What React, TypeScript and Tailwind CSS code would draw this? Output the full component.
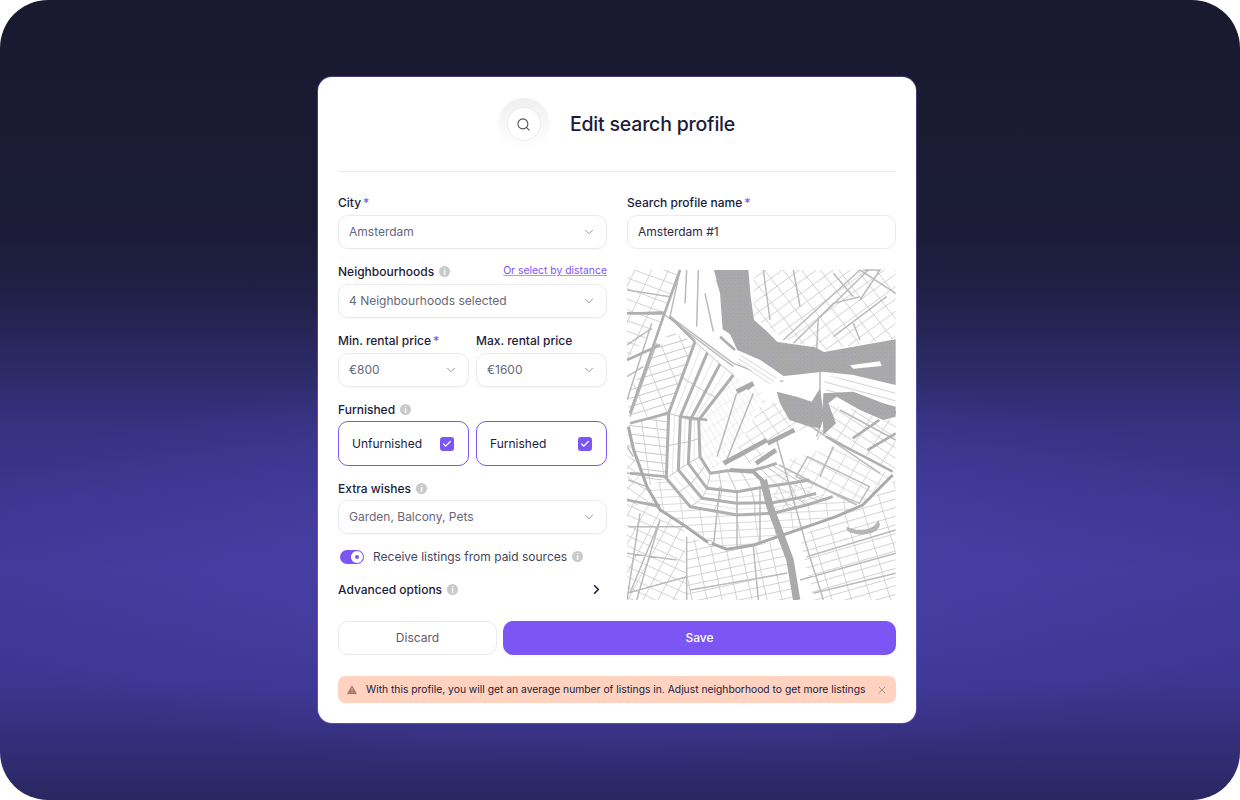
import { ChevronDown, ChevronRight, Check, Search, TriangleAlert, X } from "lucide-react";
import type { ReactNode } from "react";

const INK = "text-[#1c1b3a]";

function InfoDot() {
    return (
        <span className="inline-flex w-[11px] h-[11px] rounded-full bg-[#c9c9cd] items-center justify-center text-white text-[8px] font-bold leading-none">
            i
        </span>
    );
}

function Label({ children, required, info }: { children: ReactNode; required?: boolean; info?: boolean }) {
    return (
        <div className={`flex items-center h-4 pt-px text-[12px] font-medium ${INK}`}>
            <span>{children}</span>
            {required && <span className="ml-[2px] text-[#7c56f5]">*</span>}
            {info && (
                <span className="ml-[5px] flex">
                    <InfoDot />
                </span>
            )}
        </div>
    );
}

function SelectBox({ value }: { value: string }) {
    return (
        <div className="flex items-center justify-between h-[34px] px-[10px] rounded-[10px] border border-[#ebebef] bg-white text-[12px] text-[#67677a] shadow-[0_1px_1px_rgba(20,20,50,0.03)]">
            <span>{value}</span>
            <ChevronDown className="w-[14px] h-[14px] text-[#85858f]" strokeWidth={1.5} />
        </div>
    );
}

function CheckCard({ label }: { label: string }) {
    return (
        <div className={`flex-1 flex items-center justify-between h-[45px] pl-[13px] pr-[14px] rounded-[10px] border border-[#7c56f5] text-[12px] ${INK}`}>
            <span>{label}</span>
            <span className="flex items-center justify-center w-[14px] h-[14px] rounded-[3px] bg-[#7c56f5]">
                <Check className="w-[10px] h-[10px] text-white" strokeWidth={3} />
            </span>
        </div>
    );
}

// parallel street lines, clipped to a city block area
function hatch(angle: number, spacing: number) {
    const rad = (angle * Math.PI) / 180;
    const cx = 425;
    const cy = 520;
    const dx = Math.cos(rad);
    const dy = Math.sin(rad);
    let d = "";
    for (let i = -50; i <= 50; i++) {
        const ox = cx - dy * i * spacing;
        const oy = cy + dx * i * spacing;
        d += `M${(ox - dx * 900).toFixed(1)} ${(oy - dy * 900).toFixed(1)}L${(ox + dx * 900).toFixed(1)} ${(oy + dy * 900).toFixed(1)}`;
    }
    return d;
}

const blocks = [
    { id: "b1", c: "#c8c8c8", pts: "150,215 225,245 146,460 30,480 21,400", lines: [[-17, 24, 3], [68, 60, 2.4]] },
    { id: "b2", c: "#cccccc", pts: "21,30 175,30 130,170 21,300", lines: [[20, 30, 2.6], [-65, 46, 2.6]] },
    { id: "b3", c: "#cccccc", pts: "21,730 121,750 191,795 200,1020 21,1020", lines: [[25, 28, 2.6], [-62, 40, 2.6]] },
    { id: "b4", c: "#cccccc", pts: "200,830 321,868 401,855 500,840 520,1020 200,1020", lines: [[-12, 25, 2.6], [78, 44, 2.6]] },
    { id: "b5", c: "#cccccc", pts: "540,830 648,775 728,740 827,660 827,1020 580,1020", lines: [[-16, 25, 2.6], [73, 56, 2.6]] },
    { id: "b6", c: "#cccccc", pts: "400,30 827,30 827,235 610,270 500,240 400,170", lines: [[-36, 30, 2.6], [52, 44, 2.6]] },
    { id: "b7", c: "#cccccc", pts: "620,430 827,480 827,640 620,530 590,540", lines: [[33, 26, 2.6], [-57, 50, 2.6]] },
    { id: "b8", c: "#c8c8c8", pts: "25,490 146,460 139,655 81,680 41,570", lines: [[7, 25, 3], [82, 44, 2.4]] },
    { id: "b9", c: "#e2e2e2", pts: "236,480 340,345 430,400 340,580 271,640 240,590", lines: [[60, 16, 1.8], [-35, 34, 1.8]] },
    { id: "b10", c: "#d0d0d0", pts: "139,655 211,740 351,765 458,760 638,710 728,735 648,770 518,815 401,855 321,868 261,845 191,795 121,750 81,680", lines: [[-3, 22, 2.4], [82, 54, 2.4]] },
    { id: "b11", c: "#cccccc", pts: "21,500 25,500 41,570 81,680 121,750 21,730", lines: [[35, 26, 2.6], [-50, 40, 2.6]] },
    { id: "b12", c: "#cccccc", pts: "610,345 827,385 827,440 720,420 620,400", lines: [[15, 22, 2.6]] },
    { id: "b13", c: "#cfcfcf", pts: "505,440 590,480 600,520 560,500 440,560 410,620 340,590 430,420", lines: [[-32, 26, 2.6], [55, 40, 2.6]] },
    { id: "b14", c: "#d0d0d0", pts: "470,610 640,560 818,645 728,735 638,710 458,760", lines: [[28, 30, 2.4], [-60, 42, 2.4]] },
];

// canal belt, same point count per ring so cross streets can be interpolated
const rings = [
    [[225, 245], [146, 460], [139, 655], [211, 740], [351, 765], [458, 760], [560, 735], [638, 710]],
    [[262, 278], [181, 470], [175, 630], [246, 715], [351, 730], [458, 728], [530, 715], [588, 700]],
    [[300, 312], [211, 480], [205, 610], [261, 685], [351, 695], [436, 680], [510, 670], [568, 660]],
    [[340, 345], [236, 480], [240, 590], [271, 640], [321, 632], [401, 630], [440, 620], [470, 610]],
];

function ringPath(r: number[][]) {
    return "M" + r.map((p) => p.join(" ")).join("L");
}

function mix(a: number[], b: number[], t: number) {
    return [a[0] + (b[0] - a[0]) * t, a[1] + (b[1] - a[1]) * t];
}

function ringDetails() {
    let cross = "";
    let soft = "";
    for (let r = 0; r < rings.length - 1; r++) {
        for (let i = 0; i < rings[r].length - 1; i++) {
            for (let k = 0; k < 2; k++) {
                const t = k / 2;
                const a = mix(rings[r][i], rings[r][i + 1], t);
                const b = mix(rings[r + 1][i], rings[r + 1][i + 1], t);
                cross += `M${a[0]} ${a[1]}L${b[0]} ${b[1]}`;
            }
        }
        soft += ringPath(rings[r].map((p, i) => mix(p, rings[r + 1][i], 0.5)));
    }
    return { cross, soft };
}

const mid = [
    "M130 170L30 470M110 250L30 470M95 190L21 420",
    "M21 160L130 155M21 255L95 205M21 350L70 320M21 90L150 110",
    "M180 30L150 170L225 245M200 30L195 130M235 30L230 200",
    "M150 170L340 310L490 365M135 165L340 320",
    "M290 60L330 180M255 100L280 215",
    "M490 240L720 30M520 250L745 30M595 170L590 270M430 30L450 180M520 30L540 140",
    "M600 170L640 130L720 110M700 190L720 240M640 230L800 110M720 30L827 100",
    "M21 720L120 735M25 800L191 800M21 880L170 900",
    "M60 760L21 1020M120 780L50 1020M200 830L200 1020",
    "M400 860L415 1020M470 540L560 860L610 1020",
    "M563 590L748 680L718 730L528 650Z",
    "M478 615L710 735M640 560L600 650",
    "M280 860L300 680M351 860L351 695M420 850L420 680",
    "M21 1000L200 950M210 990L500 940M540 960L827 880M560 890L827 810M580 1000L827 940",
    "M600 270L600 430L610 470L590 530",
    "M560 490L780 640M660 450L827 540",
    "M350 400L291 590M400 400L320 600",
    "M21 560L40 590M21 640L70 640",
    "M730 30L780 30L720 120M640 40L700 110",
    "M25 660L80 680M30 1000L120 780",
];

const thick = [
    "M146 460L30 490M139 650L30 640M181 470L262 480",
    "M21 300L120 255M180 30L130 170L30 460",
    "M225 245L150 170M300 230L345 270",
    "M21 160L135 160",
    "M21 720L120 740",
    "M618 530L818 635",
    "M698 535L778 480M743 570L827 520",
];

const heavy = ["M443 550L523 510", "M408 610L468 570", "M311 610L441 540", "M380 385L400 370M350 395L400 370", "M748 425L827 460"];

function CityMap() {
    const { cross, soft } = ringDetails();
    return (
        <svg viewBox="21 27 807 993" className="block w-full h-full" preserveAspectRatio="none">
            <defs>
                <pattern id="waterDots" width="13" height="13" patternUnits="userSpaceOnUse">
                    <circle cx="3" cy="4" r="1.1" fill="#7878b4" />
                    <circle cx="9.5" cy="10" r="1.1" fill="#7878b4" />
                </pattern>
                {blocks.map((b) => (
                    <clipPath key={b.id} id={b.id}>
                        <polygon points={b.pts} />
                    </clipPath>
                ))}
            </defs>
            <rect x="21" y="27" width="807" height="993" fill="#fff" />
            {blocks.map((b) => (
                <g key={b.id} clipPath={`url(#${b.id})`} stroke={b.c} fill="none">
                    {b.lines.map((l, i) => (
                        <path key={i} d={hatch(l[0], l[1])} strokeWidth={l[2]} />
                    ))}
                </g>
            ))}
            <path d={soft} stroke="#dcdcdc" strokeWidth="2.2" fill="none" />
            <path d={cross} stroke="#c6c6c6" strokeWidth="3" fill="none" />
            <path d={mid.join("")} stroke="#bbbbbb" strokeWidth="4.5" fill="none" />
            <path d={rings.map(ringPath).join("")} stroke="#b0b0b0" strokeWidth="9" fill="none" strokeLinejoin="round" />
            <path d={thick.join("")} stroke="#b0b0b0" strokeWidth="8" fill="none" strokeLinejoin="round" />
            <path d={heavy.join("")} stroke="#aaaaaa" strokeWidth="14" fill="none" />
            {/* Singelgracht */}
            <path
                d="M25 500L41 570L81 680L121 750L191 795L261 845L321 868L401 855L518 815L648 770L728 735L818 645"
                stroke="#aaaaaa"
                strokeWidth="9"
                fill="none"
                strokeLinejoin="round"
            />
            {[0, 1].map((k) => (
                <g key={k} fill={k === 0 ? "#aaaaaa" : "url(#waterDots)"}>
                    <path d="M282 30L385 30L392 110L402 180L442 215L472 246L585 262L612 276L827 238L827 375L700 345L610 335L520 345L490 348L420 300L352 270L330 222L308 208L300 100Z" />
                    <path d="M470 395L530 410L575 425L600 385L612 470L600 505L570 500L508 480L480 430Z" />
                    <path d="M610 400L700 395L790 430L827 440L827 470L790 480L720 450L650 410L625 430L648 490L610 525L608 450Z" />
                </g>
            ))}
            {/* pier and central station island */}
            <path d="M690 316L780 304L785 318L700 326Z" fill="#fff" />
            <path d="M352 272L420 300L490 348L470 375L400 335L345 300Z" fill="#fff" />
            <path d="M360 285L470 355M355 296L462 365M350 306L452 372" stroke="#c4c4c4" strokeWidth="2" fill="none" />
            {/* Amstel */}
            <path d="M330 630L400 635L430 665" stroke="#aaaaaa" strokeWidth="12" fill="none" />
            <path d="M430 660L450 740L480 820L510 900L530 1020" stroke="#aaaaaa" strokeWidth="22" fill="none" />
            <path d="M680 800C710 815 760 815 775 780L780 795C770 830 700 830 680 810Z" fill="#b5b5b5" />
            <circle cx="270" cy="848" r="7" fill="#fff" stroke="#aeaeae" strokeWidth="2" />
        </svg>
    );
}

export default function App() {
    return (
        <div className="w-[1240px] h-[800px] bg-white font-['Inter',sans-serif]">
            <div className="w-full h-full rounded-[48px] flex justify-center pt-[77px] pr-[6px] bg-[radial-gradient(ellipse_55%_26%_at_50%_71%,#4a40a8_0%,rgba(74,64,168,0)_100%),linear-gradient(180deg,#191a30_0%,#1b1b36_28%,#201f45_36%,#2a2860_44%,#35317f_53%,#3d368f_62%,#423a9a_71%,#3d3690_85%,#332e78_93%,#2a2762_100%)]">
                <div className="w-[598px] h-[646px] bg-white rounded-[14px] px-5 shadow-[0_0_0_1px_rgba(150,130,240,0.35)]">
                    {/* Header */}
                    <div className="flex items-center justify-center gap-[20px] h-[95px] pr-[1px] border-b border-[#ebebef]">
                        <div className="relative w-[52px] h-[52px] rounded-full bg-gradient-to-b from-[#f0f0f2] to-white flex items-center justify-center">
                            <div className="w-[34px] h-[34px] rounded-full bg-white border border-[#ececf0] flex items-center justify-center">
                                <Search className="w-[15px] h-[15px] text-[#4a4a5c]" strokeWidth={1.7} />
                            </div>
                        </div>
                        <h1 className={`pt-[2px] text-[19.5px] font-medium tracking-[-0.01em] ${INK}`}>Edit search profile</h1>
                    </div>

                    <div className="flex gap-5 mt-[22px]">
                        {/* Form */}
                        <div className="w-[269px] shrink-0">
                            <Label required>City</Label>
                            <div className="mt-[5px]">
                                <SelectBox value="Amsterdam" />
                            </div>

                            <div className="flex items-center justify-between mt-[14px]">
                                <Label info>Neighbourhoods</Label>
                                <span className="text-[10.4px] text-[#7c56f5] underline decoration-[#a9a9b5]">Or select by distance</span>
                            </div>
                            <div className="mt-[5px]">
                                <SelectBox value="4 Neighbourhoods selected" />
                            </div>

                            <div className="flex gap-[7px] mt-[14px]">
                                <div className="flex-1">
                                    <Label required>Min. rental price</Label>
                                    <div className="mt-[5px]">
                                        <SelectBox value="€800" />
                                    </div>
                                </div>
                                <div className="flex-1">
                                    <Label>Max. rental price</Label>
                                    <div className="mt-[5px]">
                                        <SelectBox value="€1600" />
                                    </div>
                                </div>
                            </div>

                            <div className="mt-[14px]">
                                <Label info>Furnished</Label>
                            </div>
                            <div className="flex gap-[7px] mt-1">
                                <CheckCard label="Unfurnished" />
                                <CheckCard label="Furnished" />
                            </div>

                            <div className="mt-[14px]">
                                <Label info>Extra wishes</Label>
                            </div>
                            <div className="mt-1">
                                <SelectBox value="Garden, Balcony, Pets" />
                            </div>

                            <div className="flex items-center h-4 pt-px mt-[14px] pl-[2px] text-[12px] text-[#45455c]">
                                <span className="relative w-[24px] h-[14px] rounded-full bg-[#7c56f5] mr-[9px]">
                                    <span className="absolute right-[1px] top-[1px] w-[12px] h-[12px] rounded-full bg-white flex items-center justify-center">
                                        <span className="w-1 h-1 rounded-full bg-[#7c56f5]" />
                                    </span>
                                </span>
                                <span>Receive listings from paid sources</span>
                                <span className="ml-[5px] flex">
                                    <InfoDot />
                                </span>
                            </div>

                            <div className="flex items-center justify-between mt-[17px] pr-[3px]">
                                <Label info>Advanced options</Label>
                                <ChevronRight className="w-[15px] h-[15px] text-[#1c1b3a]" strokeWidth={2.5} />
                            </div>
                        </div>

                        {/* Right column */}
                        <div className="flex-1 flex flex-col">
                            <Label required>Search profile name</Label>
                            <div className="mt-[5px] flex items-center h-[34px] px-[10px] rounded-[10px] border border-[#ebebef] text-[12px] text-[#2b2a45]">
                                Amsterdam #1
                            </div>
                            <div className="mt-5 h-[331px]">
                                <CityMap />
                            </div>
                        </div>
                    </div>

                    {/* Actions */}
                    <div className="flex gap-[6px] mt-[21px]">
                        <button className="w-[159px] h-[34px] rounded-[10px] border border-[#ebebef] bg-white text-[12px] text-[#5d5d70]">Discard</button>
                        <button className="flex-1 h-[34px] rounded-[10px] bg-[#7c56f5] text-[12px] font-medium text-white">Save</button>
                    </div>

                    {/* Warning */}
                    <div className={`flex items-center justify-between h-[27px] mt-[21px] pl-2 pr-[8px] rounded-[7px] bg-[#ffd3c0] text-[10.3px] ${INK}`}>
                        <div className="flex items-center gap-2">
                            <TriangleAlert className="w-3 h-3 text-[#a5786a]" fill="#a5786a" stroke="#ffd3c0" strokeWidth={1.5} />
                            <span>With this profile, you will get an average number of listings in. Adjust neighborhood to get more listings</span>
                        </div>
                        <X className="w-3 h-3 text-[#a5786a]" strokeWidth={1.5} />
                    </div>
                </div>
            </div>
        </div>
    );
}
